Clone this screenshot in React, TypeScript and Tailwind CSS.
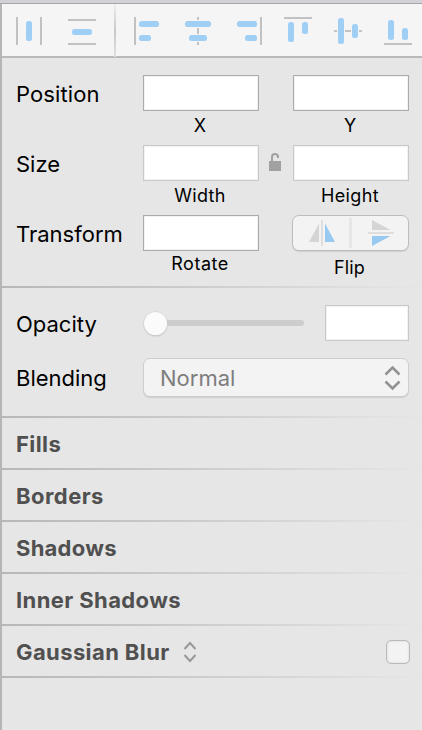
import type { ReactNode } from 'react';

type Box = [number, number, number, number];

/* Toolbar glyph made of grey guide lines and blue rounded bars. */
function AlignIcon({ w, className, lines, bars }: { w: number; className: string; lines: Box[]; bars: Box[] }) {
  return (
    <svg width={w} height={28} viewBox={`0 0 ${w} 28`} className={`shrink-0 ${className}`}>
      {lines.map(([x, y, a, b], i) => (
        <rect key={i} x={x} y={y} width={a} height={b} fill="#c2c2c2" />
      ))}
      {bars.map(([x, y, a, b], i) => (
        <rect key={i} x={x} y={y} width={a} height={b} rx={2.5} fill="#a0cff6" />
      ))}
    </svg>
  );
}

function Divider() {
  return <div className="h-[2px] shrink-0 bg-linear-to-r from-[#b7b7b7] to-[#e6e6e6]" />;
}

function Label({ children, className }: { children: ReactNode; className: string }) {
  return <div className={`w-[127px] shrink-0 text-[22px] leading-[36px] whitespace-nowrap ${className}`}>{children}</div>;
}

function Field({ className = 'w-[116px] border-[#ababab]' }: { className?: string }) {
  return <div className={`h-[36px] shrink-0 border bg-white shadow-[inset_0_0_0_1px_#f2f2f2] ${className}`} />;
}

function Caption({ children, className = '' }: { children: ReactNode; className?: string }) {
  return <div className={`pr-[2px] text-center text-[18px] leading-[18px] ${className}`}>{children}</div>;
}

function Section({ title, className, children }: { title: string; className: string; children?: ReactNode }) {
  return (
    <>
      <div className="flex h-[50px] shrink-0 items-center pr-[12px] pl-[14px]">
        <span className={`pt-[2px] text-[22px] leading-[30px] font-bold whitespace-nowrap text-[#505050] ${className}`}>{title}</span>
        {children}
      </div>
      <Divider />
    </>
  );
}

export default function App() {
  return (
    <div className="flex h-[730px] w-[422px] flex-col overflow-hidden bg-[#e6e6e6] font-['Inter',sans-serif] text-black">
      <div className="h-[4px] shrink-0 border-b border-[#a6a5aa] bg-[#d2d1d6]" />
      <div className="flex min-h-0 flex-1 flex-col border-l-2 border-[#b6b6b6]">
        <div className="flex h-[54px] shrink-0 items-start border-b-2 border-[#b9b9b9] bg-[#f5f5f5]">
          <AlignIcon w={26} className="mt-[13px] ml-[14px]" lines={[[0, 0, 2, 28], [24, 0, 2, 28]]} bars={[[10, 4, 6, 20]]} />
          <AlignIcon w={28} className="mt-[13px] ml-[26px]" lines={[[0, 2, 28, 2], [0, 26, 28, 2]]} bars={[[4, 12, 20, 6]]} />
          <div className="ml-[18px] h-[53px] w-[2px] shrink-0 bg-linear-to-b from-[#ececec] via-[#c8c8c8] to-[#e0e0e0]" />
          <AlignIcon w={25} className="mt-[13px] ml-[18px]" lines={[[0, 0, 2, 28]]} bars={[[5, 4, 20, 6], [5, 18, 12, 6]]} />
          <AlignIcon w={26} className="mt-[13px] ml-[26px]" lines={[[12, 0, 2, 3], [12, 11, 2, 6], [12, 25, 2, 3]]} bars={[[0, 4, 26, 6], [4, 18, 18, 6]]} />
          <AlignIcon w={25} className="mt-[13px] ml-[26px]" lines={[[23, 0, 2, 28]]} bars={[[0, 4, 20, 6], [8, 18, 12, 6]]} />
          <AlignIcon w={28} className="mt-[13px] ml-[22px]" lines={[[0, 0, 28, 2]]} bars={[[4, 5, 6, 20], [18, 5, 6, 12]]} />
          <AlignIcon w={28} className="mt-[13px] ml-[22px]" lines={[[0, 13, 3, 2], [11, 13, 6, 2], [25, 13, 3, 2]]} bars={[[4, 1, 6, 26], [18, 7, 6, 14]]} />
          <AlignIcon w={28} className="mt-[13px] ml-[22px]" lines={[[0, 26, 28, 2]]} bars={[[4, 3, 6, 20], [18, 11, 6, 12]]} />
        </div>

        <div className="flex h-[228px] shrink-0 flex-col pt-[17px] pl-[14px]">
          <div className="flex h-[70px] shrink-0">
            <Label className="pt-[1px] tracking-[0.1px]">Position</Label>
            <div className="w-[116px]">
              <Field />
              <Caption className="mt-[6px]">X</Caption>
            </div>
            <div className="ml-[34px] w-[116px]">
              <Field />
              <Caption className="mt-[6px]">Y</Caption>
            </div>
          </div>
          <div className="flex h-[70px] shrink-0">
            <Label className="pt-[1px]">Size</Label>
            <div className="w-[116px]">
              <Field className="border-[#c9c9c9]" />
              <Caption className="mt-[6px] tracking-[0.3px]">Width</Caption>
            </div>
            <svg width={12} height={18} viewBox="0 0 12 18" className="mt-[8px] mr-[12px] ml-[10px] shrink-0">
              <rect y={8} width={12} height={10} fill="#a1a1a1" />
              <path d="M3 9V4.2C3 2 4.400 1 6 1s3 1 3 3.200V5" fill="none" stroke="#a1a1a1" strokeWidth={2} />
            </svg>
            <div className="w-[116px]">
              <Field className="border-[#c9c9c9]" />
              <Caption className="mt-[6px] tracking-[0.4px]">Height</Caption>
            </div>
          </div>
          <div className="flex shrink-0">
            <Label className="pt-[1px]">Transform</Label>
            <div className="w-[116px]">
              <Field />
              <Caption className="mt-[4px] tracking-[0.5px]">Rotate</Caption>
            </div>
            <div className="ml-[33px] w-[117px]">
              <div className="flex h-[36px] rounded-[7px] border border-[#bdbdbd] bg-[#f3f3f3] shadow-[0_1px_1px_#cfcfcf]">
                <svg width={115} height={34} viewBox="293 216 115 34">
                  <path d="M319 223.500V242H309z" fill="#d5d5d5" />
                  <path d="M325 223.500V242H335z" fill="#98c9f1" />
                  <rect x={321} y={220} width={2} height={26} fill="#dedede" />
                  <rect x={349} y={218} width={3} height={30} fill="#e6e6e6" />
                  <path d="M372 220V230H390.500z" fill="#d5d5d5" />
                  <path d="M372 246V236H390.500z" fill="#98c9f1" />
                  <rect x={368} y={232} width={26} height={2} fill="#dedede" />
                </svg>
              </div>
              <Caption className="mt-[8px] tracking-[0.2px]">Flip</Caption>
            </div>
          </div>
        </div>
        <Divider />

        <div className="flex h-[128px] shrink-0 flex-col pt-[17px] pl-[14px]">
          <div className="flex h-[53px] shrink-0">
            <Label className="pt-[1px]">Opacity</Label>
            <div className="flex h-[36px] w-[161px] items-center pl-[0.5px]">
              <div className="z-10 size-[23px] shrink-0 rounded-full bg-[#fbfbfb] shadow-[0_0_0_0.5px_#d0d0d0,0_1px_2px_#bcbcbc]" />
              <div className="-ml-[4px] h-[6px] flex-1 rounded-full bg-[#cdcdcd]" />
            </div>
            <Field className="ml-[21px] w-[84px] border-[#c9c9c9]" />
          </div>
          <div className="flex">
            <Label className="pt-[2px]">Blending</Label>
            <div className="flex h-[39px] w-[266px] items-center justify-between rounded-[7px] border border-[#cecece] bg-[#f3f3f3] pr-[7px] pl-[16px] shadow-[0_1px_1px_#cecece]">
              <span className="pt-[1px] text-[22px] leading-[30px] text-[#7d7d7d]">Normal</span>
              <svg width={17} height={26} viewBox="0 0 17 26" fill="none" stroke="#929292" strokeWidth={2.600} className="shrink-0">
                <path d="M1.500 9.500L8.500 2.500L15.500 9.500M1.500 16.500L8.500 23.500L15.500 16.500" />
              </svg>
            </div>
          </div>
        </div>
        <Divider />

        <Section title="Fills" className="tracking-[0.4px]" />
        <Section title="Borders" className="tracking-[0.45px]" />
        <Section title="Shadows" className="tracking-[0.25px]" />
        <Section title="Inner Shadows" className="tracking-[0.4px]" />
        <Section title="Gaussian Blur" className="tracking-[0.4px]">
          <svg width={14} height={22} viewBox="0 0 14 22" fill="none" stroke="#989898" strokeWidth={2} className="mt-[2px] ml-[13px] shrink-0">
            <path d="M1.500 8L7 2L12.500 8M1.500 14L7 20L12.500 14" />
          </svg>
          <div className="mt-[2px] ml-auto size-[24px] rounded-[5px] border border-[#bababa] bg-[#f3f3f3] shadow-[inset_0_0_2px_#c9c9c9]" />
        </Section>
      </div>
    </div>
  );
}
